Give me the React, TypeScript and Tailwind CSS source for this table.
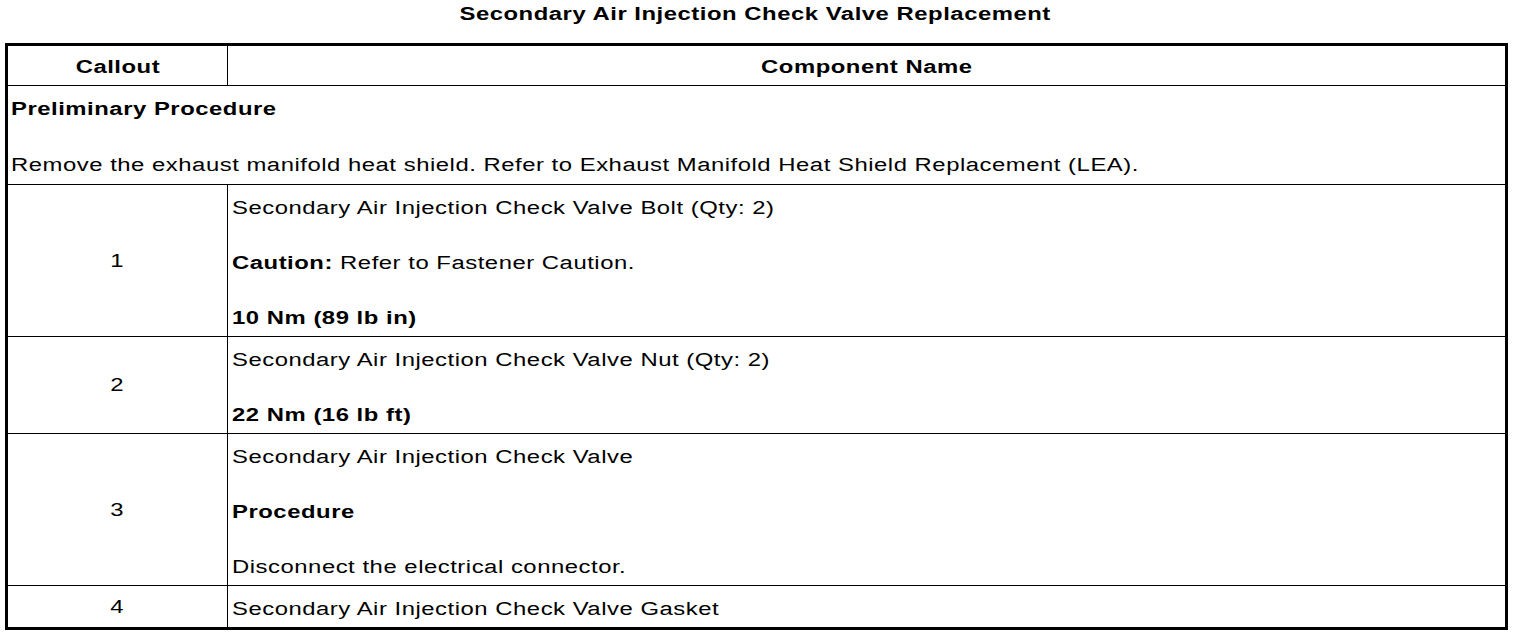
import type { ReactNode } from "react";

// wide, slightly stretched Helvetica look of the source document
function T({ children, center = false, bold = false }: { children: ReactNode; center?: boolean; bold?: boolean }) {
  return (
    <span
      className={`inline-block whitespace-nowrap tracking-[0.4px] scale-x-[1.325] ${center ? "origin-center" : "origin-left"} ${bold ? "font-bold" : ""}`}
    >
      {children}
    </span>
  );
}

type Row = { callout: string; lines: ReactNode[] };

const rows: Row[] = [
  {
    callout: "1",
    lines: [
      <T>Secondary Air Injection Check Valve Bolt (Qty: 2)</T>,
      <T>
        <b>Caution:</b> Refer to Fastener Caution.
      </T>,
      <T bold>10 Nm (89 lb in)</T>,
    ],
  },
  {
    callout: "2",
    lines: [<T>Secondary Air Injection Check Valve Nut (Qty: 2)</T>, <T bold>22 Nm (16 lb ft)</T>],
  },
  {
    callout: "3",
    lines: [
      <T>Secondary Air Injection Check Valve</T>,
      <T bold>Procedure</T>,
      <T>Disconnect the electrical connector.</T>,
    ],
  },
  {
    callout: "4",
    lines: [<T>Secondary Air Injection Check Valve Gasket</T>],
  },
];

export default function App() {
  return (
    <div className="w-[1520px] h-[636px] bg-white text-black text-[18px] leading-[19px] font-['Liberation_Sans',Arial,sans-serif] overflow-hidden">
      <div className="pt-[5px] pr-[10px] h-[43px] text-center">
        <T center bold>
          Secondary Air Injection Check Valve Replacement
        </T>
      </div>

      <div className="ml-[5px] w-[1503px] border-[3px] border-black">
        <div className="grid grid-cols-[220px_1fr] border-b border-black">
          <div className="border-r border-black text-center pt-[12px] pb-[8px]">
            <T center bold>Callout</T>
          </div>
          <div className="text-center pt-[12px] pb-[8px]">
            <T center bold>Component Name</T>
          </div>
        </div>

        <div className="flex flex-col gap-[37px] border-b border-black pl-[3px] pt-[14px] pb-[9px]">
          <div>
            <T bold>Preliminary Procedure</T>
          </div>
          <div>
            <T>Remove the exhaust manifold heat shield. Refer to Exhaust Manifold Heat Shield Replacement (LEA).</T>
          </div>
        </div>

        {rows.map((row, i) => (
          <div
            key={row.callout}
            className={`grid grid-cols-[220px_1fr] ${i < rows.length - 1 ? "border-b border-black" : ""}`}
          >
            <div className="border-r border-black flex items-center justify-center pt-[1px]">
              <T center>{row.callout}</T>
            </div>
            <div className="flex flex-col gap-[36px] pl-[4px] pt-[14px] pb-[8px]">
              {row.lines.map((line, j) => (
                <div key={j}>{line}</div>
              ))}
            </div>
          </div>
        ))}
      </div>
    </div>
  );
}
